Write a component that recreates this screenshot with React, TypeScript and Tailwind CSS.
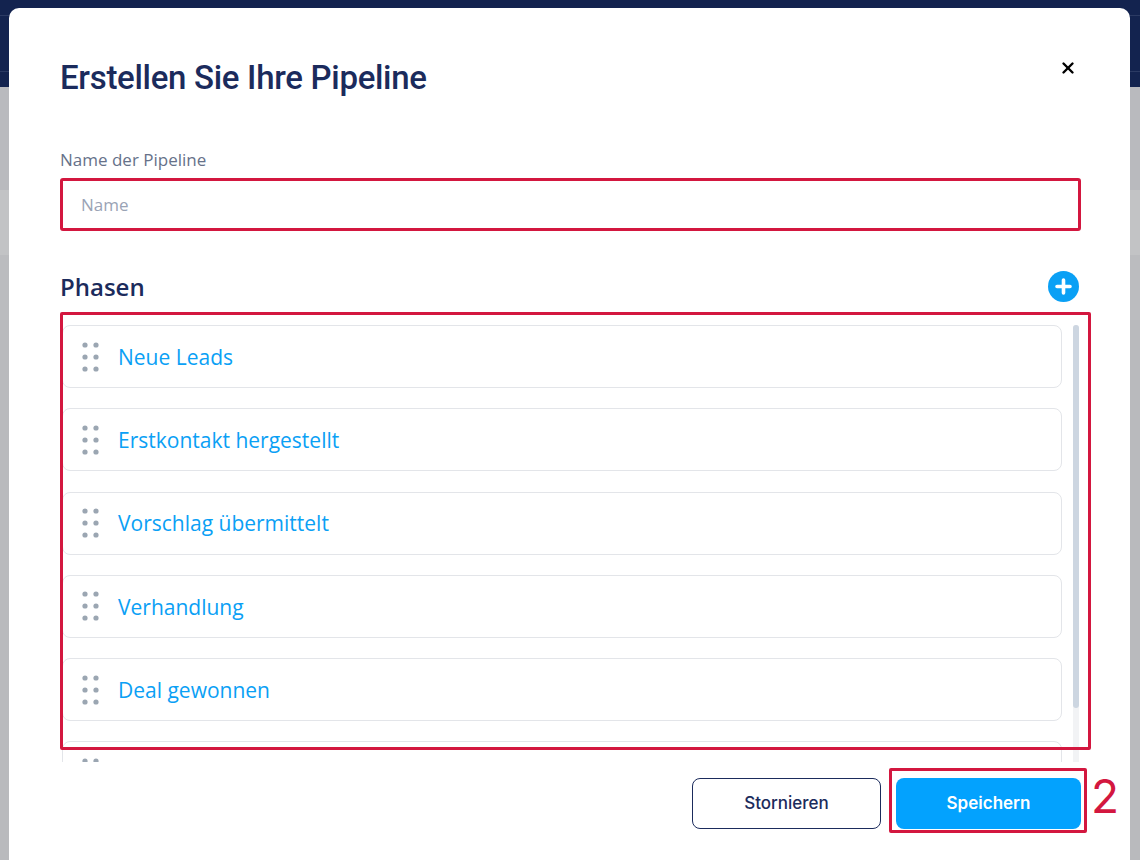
import { X } from "lucide-react";

const phases = [
  "Neue Leads",
  "Erstkontakt hergestellt",
  "Vorschlag übermittelt",
  "Verhandlung",
  "Deal gewonnen",
  "Deal verloren",
];

function DragDots() {
  return (
    <svg width="18" height="30" viewBox="0 0 18 30" className="shrink-0">
      {[3, 15, 27].map((cy) =>
        [3, 14].map((cx) => (
          <circle key={`${cx}-${cy}`} cx={cx} cy={cy} r="2.6" fill="#9ba6b2" />
        ))
      )}
    </svg>
  );
}

function PlusCircle() {
  return (
    <svg width="31" height="31" viewBox="0 0 31 31">
      <circle cx="15.5" cy="15.5" r="15.5" fill="#0aa0f5" />
      <path d="M15.5 9v13M9 15.5h13" stroke="#fff" strokeWidth="3.6" strokeLinecap="round" />
    </svg>
  );
}

export default function App() {
  return (
    <div className="relative h-[860px] w-[1140px] overflow-hidden bg-[#bcbdc0] font-['Open_Sans',sans-serif]">
      {/* page behind the modal */}
      <div className="flex flex-col">
        <div className="h-[87px] bg-[#13234f] flex flex-col">
          <div className="h-[16px] border-b border-[#2b3a63]" />
          <div className="h-[56px] border-b border-[#2b3a63]" />
        </div>
        <div className="h-[103px] bg-[#b9babe]" />
        <div className="h-[65px] bg-[#c2c3c5]" />
        <div className="h-[65px] bg-[#bbbcbf]" />
        <div className="h-[540px] bg-[#b9babd]" />
      </div>

      {/* modal */}
      <div className="absolute left-[9px] top-[8px] w-[1121px] h-[900px] bg-white rounded-[10px] pl-[51px] pr-[49px] pt-[52px]">
        <div className="flex items-center justify-between h-[36px]">
          <h1 className="text-[33px] font-medium text-[#1b2b5c] font-['Roboto',sans-serif] tracking-[-0.3px]">
            Erstellen Sie Ihre Pipeline
          </h1>
          <button className="mr-[4px] -mt-[20px] text-black">
            <X size={18} strokeWidth={3.2} />
          </button>
        </div>

        <label className="block mt-[54px] h-[20px] leading-[20px] text-[17px] text-[#667189]">
          Name der Pipeline
        </label>
        <input
          placeholder="Name"
          className="mt-[8px] block w-full h-[53px] px-[18px] border-[3px] border-[#d3173f] rounded-[3px] text-[17px] text-[#1b2b5c] outline-none placeholder:text-[#9aa3b5]"
        />

        <div className="mt-[41px] flex items-center justify-between h-[30px]">
          <h2 className="text-[24px] font-semibold text-[#1b2b5c]">Phasen</h2>
          <div className="mr-[2px] mt-[-2px]">
            <PlusCircle />
          </div>
        </div>

        <div className="relative mt-[20px]">
          <div className="h-[440px] overflow-hidden flex pt-[3px]">
            <div className="flex flex-col gap-[20.3px] w-[1000px] ml-[2px]">
              {phases.map((p) => (
                <div
                  key={p}
                  className="h-[63px] shrink-0 flex items-center gap-[18px] pl-[19px] border border-[#e3e5e9] rounded-[8px]"
                >
                  <DragDots />
                  <span className="pt-[2px] text-[21px] text-[#0aa0f5]">{p}</span>
                </div>
              ))}
            </div>
            <div className="ml-[11px] w-[6px] h-[440px] rounded-full bg-[#f2f3f5] flex flex-col">
              <div className="h-[383px] rounded-full bg-[#cdd6e1]" />
            </div>
          </div>
          {/* annotation frame */}
          <div className="pointer-events-none absolute left-0 top-[-10px] w-[1031px] h-[438px] border-[3px] border-[#d3173f] rounded-[2px]" />
        </div>

        <div className="mt-[16px] flex justify-end gap-[15px]">
          <button className="w-[189px] h-[51px] rounded-[8px] border border-[#1b2b5c] text-[17px] font-medium text-[#1b2b5c] font-['Inter',sans-serif]">
            Stornieren
          </button>
          <div className="relative">
            <button className="w-[185px] h-[51px] rounded-[8px] bg-[#03a2fe] text-[17px] font-semibold text-white font-['Inter',sans-serif]">
              Speichern
            </button>
            <div className="pointer-events-none absolute -left-[7px] -top-[10px] w-[198px] h-[65px] border-[3px] border-[#d3173f] rounded-[2px]" />
            <span className="absolute left-[195px] -top-[14px] text-[46px] leading-[64px] text-[#d3173f] font-['Inter',sans-serif]">
              2
            </span>
          </div>
        </div>
      </div>
    </div>
  );
}
